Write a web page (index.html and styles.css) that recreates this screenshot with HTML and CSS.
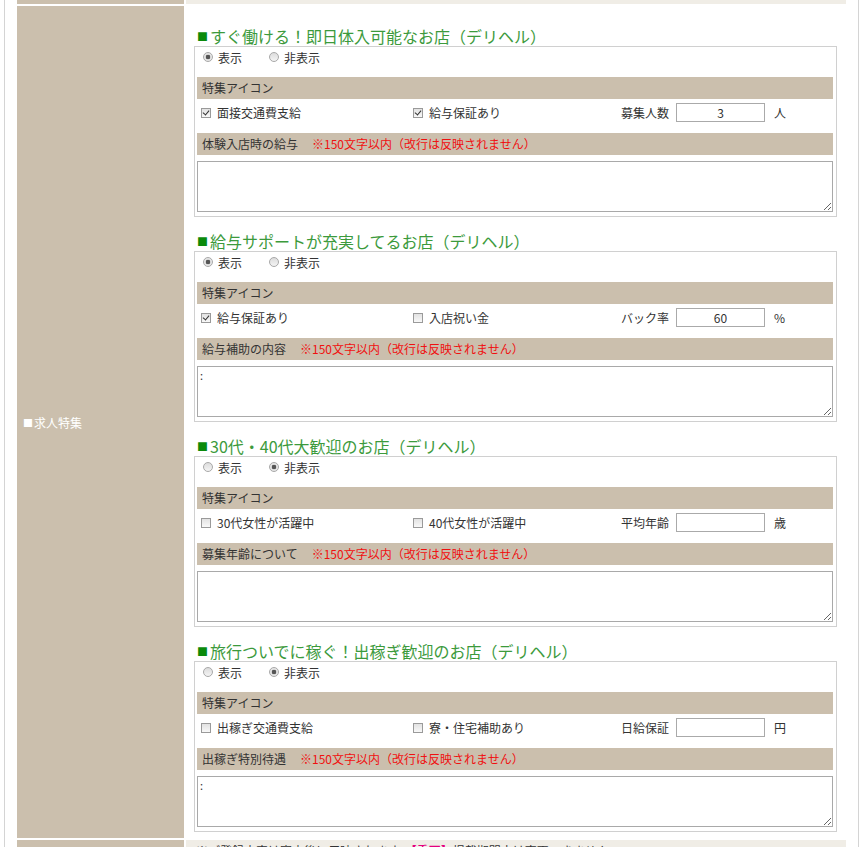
FILE: index.html
```html
<!DOCTYPE html>
<html>
<head>
    <title>求人特集の設定</title>
    <meta charset="UTF-8">
    <link rel="stylesheet" href="styles.css">
</head>
<body>
    <div class="wrap">
        <table class="form-table">
            <tr class="row-prev">
                <th></th>
                <td></td>
            </tr>
            <tr>
                <th><span class="mark">■</span>求人特集</th>
                <td class="main">
                    <div class="feature">
                        <h2 class="feature-title"><span class="mark">■</span>すぐ働ける！即日体入可能なお店（デリヘル）</h2>
                        <div class="feature-box">
                            <div class="radio-row">
                                <label><input type="radio" name="f1" checked>表示</label>
                                <label><input type="radio" name="f1">非表示</label>
                            </div>
                            <div class="bar">特集アイコン</div>
                            <div class="check-row">
                                <label><input type="checkbox" checked>面接交通費支給</label>
                                <label><input type="checkbox" checked>給与保証あり</label>
                                <div class="num-field">募集人数<input type="text" value="3"><span class="unit">人</span></div>
                            </div>
                            <div class="bar">体験入店時の給与<span class="note">※150文字以内（改行は反映されません）</span></div>
                            <textarea></textarea>
                        </div>
                    </div>

                    <div class="feature">
                        <h2 class="feature-title"><span class="mark">■</span>給与サポートが充実してるお店（デリヘル）</h2>
                        <div class="feature-box">
                            <div class="radio-row">
                                <label><input type="radio" name="f2" checked>表示</label>
                                <label><input type="radio" name="f2">非表示</label>
                            </div>
                            <div class="bar">特集アイコン</div>
                            <div class="check-row">
                                <label><input type="checkbox" checked>給与保証あり</label>
                                <label><input type="checkbox">入店祝い金</label>
                                <div class="num-field">バック率<input type="text" value="60"><span class="unit">%</span></div>
                            </div>
                            <div class="bar">給与補助の内容<span class="note">※150文字以内（改行は反映されません）</span></div>
                            <textarea>:</textarea>
                        </div>
                    </div>

                    <div class="feature">
                        <h2 class="feature-title"><span class="mark">■</span>30代・40代大歓迎のお店（デリヘル）</h2>
                        <div class="feature-box">
                            <div class="radio-row">
                                <label><input type="radio" name="f3">表示</label>
                                <label><input type="radio" name="f3" checked>非表示</label>
                            </div>
                            <div class="bar">特集アイコン</div>
                            <div class="check-row">
                                <label><input type="checkbox">30代女性が活躍中</label>
                                <label><input type="checkbox">40代女性が活躍中</label>
                                <div class="num-field">平均年齢<input type="text" value=""><span class="unit">歳</span></div>
                            </div>
                            <div class="bar">募集年齢について<span class="note">※150文字以内（改行は反映されません）</span></div>
                            <textarea></textarea>
                        </div>
                    </div>

                    <div class="feature">
                        <h2 class="feature-title"><span class="mark">■</span>旅行ついでに稼ぐ！出稼ぎ歓迎のお店（デリヘル）</h2>
                        <div class="feature-box">
                            <div class="radio-row">
                                <label><input type="radio" name="f4">表示</label>
                                <label><input type="radio" name="f4" checked>非表示</label>
                            </div>
                            <div class="bar">特集アイコン</div>
                            <div class="check-row">
                                <label><input type="checkbox">出稼ぎ交通費支給</label>
                                <label><input type="checkbox">寮・住宅補助あり</label>
                                <div class="num-field">日給保証<input type="text" value=""><span class="unit">円</span></div>
                            </div>
                            <div class="bar">出稼ぎ特別待遇<span class="note">※150文字以内（改行は反映されません）</span></div>
                            <textarea>:</textarea>
                        </div>
                    </div>
                </td>
            </tr>
            <tr class="row-next">
                <th></th>
                <td>※ご登録内容は審査後に反映されます。<span class="pink">【重要】</span>掲載期間中は変更できません。</td>
            </tr>
        </table>
    </div>
</body>
</html>
```

FILE: styles.css
```css
body {
    margin: 0;
    font-family: "Noto Sans CJK JP", sans-serif;
    font-size: 12px;
    color: #333;
    background: #fff;
}
.wrap {
    box-sizing: border-box;
    width: 855px;
    margin-left: 4px;
    padding: 0 10px;
    border-left: 1px solid #d4d4d4;
    border-right: 1px solid #d4d4d4;
}
.form-table {
    width: 100%;
    margin-top: -2px;
    border-collapse: separate;
    border-spacing: 2px;
}
.form-table th {
    box-sizing: border-box;
    width: 167px;
    padding: 0 6px;
    background: #cbbfad;
    color: #fff;
    font-weight: normal;
    text-align: left;
    vertical-align: middle;
}
.form-table td {
    padding: 0;
    vertical-align: top;
}
.mark {
    font-size: 10px;
    margin-right: 1px;
    vertical-align: 1px;
}
.row-prev th, .row-prev td {
    height: 4px;
    line-height: 0;
}
.row-prev td, .row-next td {
    background: #f0ede6;
}
.row-next td {
    padding: 3px 10px 0;
    line-height: 16px;
}
.pink {
    color: #e4007f;
    font-weight: bold;
}
.main {
    padding: 6px 9px 6px 8px !important;
}
.feature {
    margin-top: 15px;
}
.feature-title {
    height: 19px;
    margin: 0;
    padding-left: 3px;
    font-size: 16px;
    font-weight: normal;
    line-height: 19px;
    color: #3c9a3c;
    white-space: nowrap;
}
.feature-title .mark {
    color: #0b8a0b;
    font-size: 11px;
    margin-right: 2px;
    vertical-align: 2px;
}
.feature-box {
    border: 1px solid #d0d0d0;
    padding: 0 3px 4px 2px;
}
.radio-row {
    height: 20px;
    margin-bottom: 10px;
    padding-left: 6px;
    display: flex;
    align-items: center;
}
.radio-row label {
    display: flex;
    align-items: center;
    margin-right: 27px;
}
.bar {
    height: 22px;
    line-height: 22px;
    padding: 0 5px;
    background: #cbbfad;
}
.note {
    color: #f01010;
    margin-left: 14px;
}
.check-row {
    display: grid;
    grid-template-columns: 212px 212px 1fr;
    align-items: center;
    padding: 4px 0 11px;
}
.check-row label {
    display: flex;
    align-items: center;
    padding-left: 4px;
}
.num-field {
    display: flex;
    align-items: center;
}
.num-field input {
    box-sizing: border-box;
    width: 89px;
    height: 19px;
    margin: 0 0 0 7px;
    padding: 0 2px;
    border: 1px solid #aaa;
    font-family: inherit;
    font-size: 12px;
    color: #333;
    text-align: center;
}
.unit {
    margin-left: 9px;
}
input[type="radio"] {
    appearance: none;
    box-sizing: border-box;
    width: 10px;
    height: 10px;
    margin: 0 5px 0 0;
    border: 1px solid #a8a8a8;
    border-radius: 50%;
    background: linear-gradient(#dcdcdc, #f4f4f4);
}
input[type="radio"]:checked {
    background: radial-gradient(circle, #555 0, #555 2px, #e0e0e0 2.6px, #f2f2f2 100%);
}
input[type="checkbox"] {
    appearance: none;
    position: relative;
    box-sizing: border-box;
    width: 10px;
    height: 10px;
    margin: 0 6px 0 0;
    border: 1px solid #9a9a9a;
    background: linear-gradient(#e2e2e2, #f8f8f8);
}
input[type="checkbox"]:checked::after {
    content: "";
    position: absolute;
    left: 2px;
    top: 0;
    width: 3px;
    height: 5px;
    border: solid #333;
    border-width: 0 1.5px 1.5px 0;
    transform: rotate(40deg);
}
textarea {
    display: block;
    box-sizing: border-box;
    width: 100%;
    height: 51px;
    margin-top: 6px;
    padding: 1px 2px;
    border: 1px solid #a9a9a9;
    font-family: inherit;
    font-size: 11px;
    line-height: 14px;
    color: #333;
    resize: both;
}
```
